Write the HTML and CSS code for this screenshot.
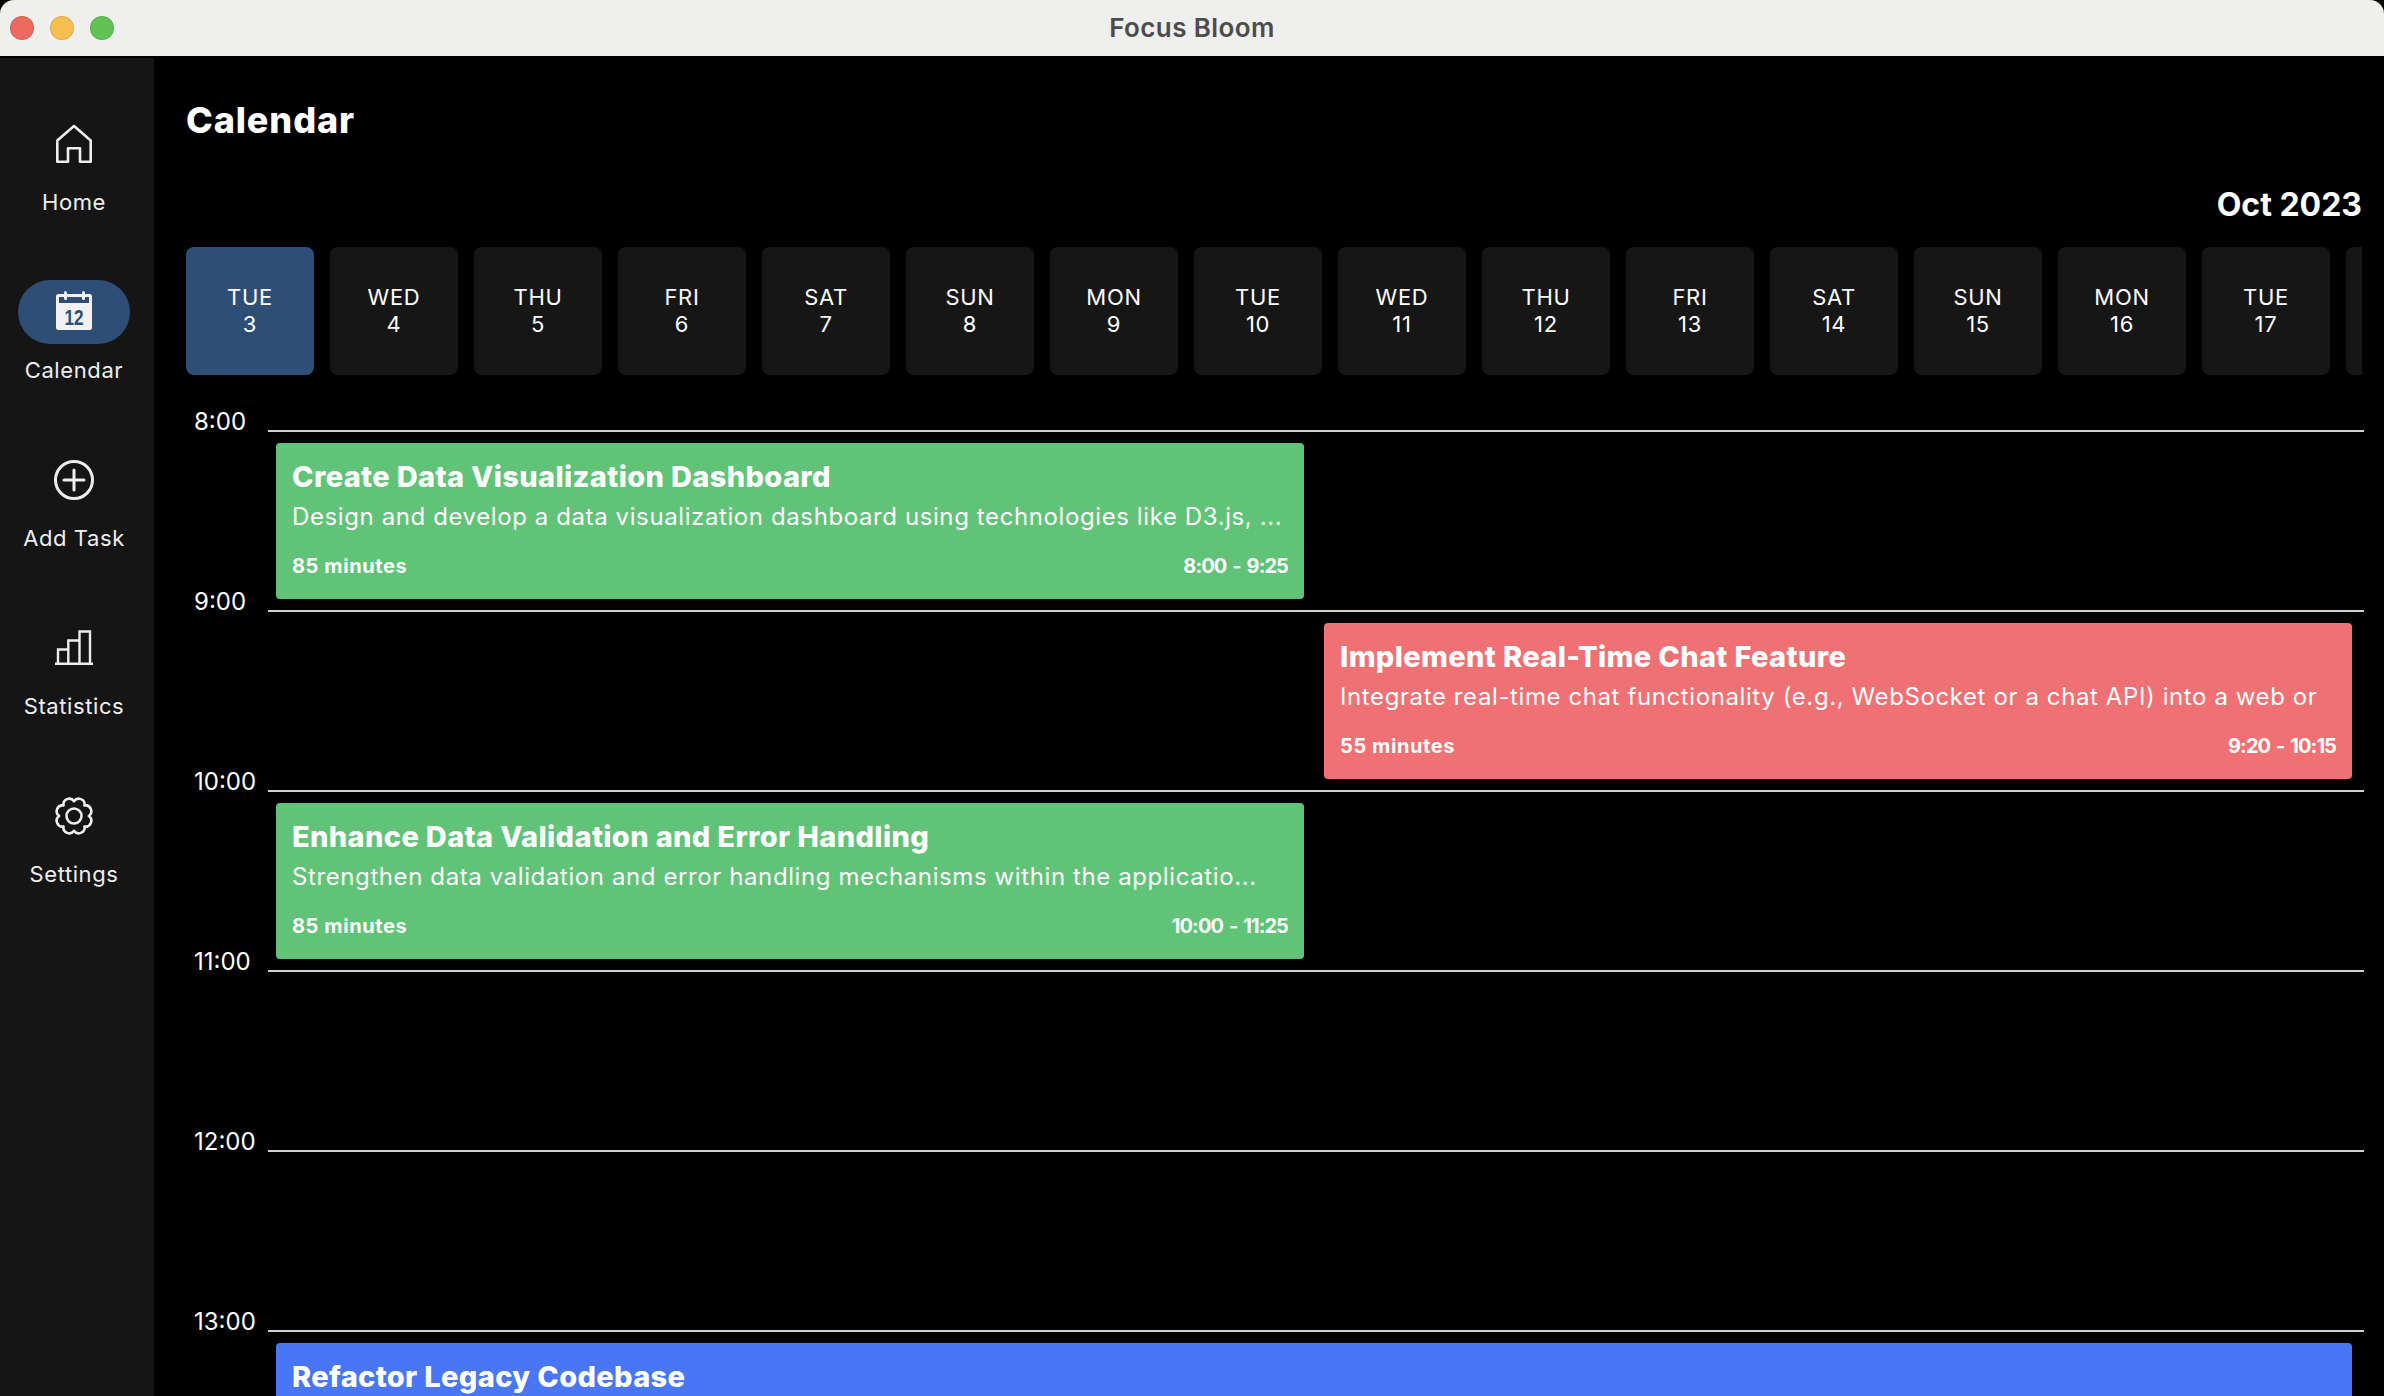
FILE: index.html
```html
<!DOCTYPE html>
<html lang="en">
<head>
<meta charset="utf-8">
<title>Focus Bloom</title>
<link rel="stylesheet" href="styles.css">
</head>
<body>
<div class="window">
  <header class="titlebar">
    <div class="lights">
      <span class="light light-red"></span>
      <span class="light light-yellow"></span>
      <span class="light light-green"></span>
    </div>
    <span class="window-title">Focus Bloom</span>
  </header>
  <div class="app">
    <nav class="sidebar">
      <a class="nav-item">
        <span class="nav-icon">
          <svg width="48" height="48" viewBox="0 0 48 48" fill="none" stroke="#eee" stroke-width="2.6" stroke-linejoin="round"><path d="M7.3 20.5 24 6l16.700 14.500V41.700H30V28.200H18V41.700H7.300Z"/></svg>
        </span>
        <span class="nav-label">Home</span>
      </a>
      <a class="nav-item nav-item-active">
        <span class="nav-icon">
          <svg width="48" height="48" viewBox="0 0 48 48">
            <rect x="6" y="6" width="36" height="36" rx="2.500" fill="#f1f1f3"/>
            <rect x="9" y="9" width="30" height="6" fill="#2e4e75"/>
            <rect x="14" y="3" width="3" height="9" rx="1.500" fill="#f1f1f3"/>
            <rect x="32" y="3" width="3" height="9" rx="1.500" fill="#f1f1f3"/>
            <text x="24" y="36.500" text-anchor="middle" textLength="19" lengthAdjust="spacingAndGlyphs" class="cal-num">12</text>
          </svg>
        </span>
        <span class="nav-label">Calendar</span>
      </a>
      <a class="nav-item">
        <span class="nav-icon">
          <svg width="48" height="48" viewBox="0 0 48 48" fill="none" stroke="#eee" stroke-width="3"><circle cx="24" cy="24" r="18.500"/><path d="M14 24H34M24 14V34" stroke-linecap="round"/></svg>
        </span>
        <span class="nav-label">Add Task</span>
      </a>
      <a class="nav-item">
        <span class="nav-icon">
          <svg width="48" height="48" viewBox="0 0 48 48" fill="none" stroke="#eee" stroke-width="2.400"><path d="M5 39.800H43"/><path d="M8 39.800V25.500H18.300V39.800M18.300 25.500V16.500H29.500V39.800M29.500 16.500V7.500H40V39.800"/></svg>
        </span>
        <span class="nav-label">Statistics</span>
      </a>
      <a class="nav-item">
        <span class="nav-icon">
          <svg width="48" height="48" viewBox="0 0 48 48" fill="none" stroke="#eee" stroke-width="2.600" stroke-linejoin="round"><path d="M38.800 24A5.800 5.800 0 0 1 34.470 34.470 5.800 5.800 0 0 1 24 38.800 5.800 5.800 0 0 1 13.530 34.470 5.800 5.800 0 0 1 9.200 24 5.800 5.800 0 0 1 13.530 13.530 5.800 5.800 0 0 1 24 9.200 5.800 5.800 0 0 1 34.470 13.530 5.800 5.800 0 0 1 38.800 24Z"/><circle cx="24" cy="24" r="7.500"/></svg>
        </span>
        <span class="nav-label">Settings</span>
      </a>
    </nav>
    <main class="content">
      <h1 class="page-title">Calendar</h1>
      <div class="month">Oct 2023</div>
      <div class="days">
        <div class="day day-active"><span>TUE</span><span>3</span></div>
        <div class="day"><span>WED</span><span>4</span></div>
        <div class="day"><span>THU</span><span>5</span></div>
        <div class="day"><span>FRI</span><span>6</span></div>
        <div class="day"><span>SAT</span><span>7</span></div>
        <div class="day"><span>SUN</span><span>8</span></div>
        <div class="day"><span>MON</span><span>9</span></div>
        <div class="day"><span>TUE</span><span>10</span></div>
        <div class="day"><span>WED</span><span>11</span></div>
        <div class="day"><span>THU</span><span>12</span></div>
        <div class="day"><span>FRI</span><span>13</span></div>
        <div class="day"><span>SAT</span><span>14</span></div>
        <div class="day"><span>SUN</span><span>15</span></div>
        <div class="day"><span>MON</span><span>16</span></div>
        <div class="day"><span>TUE</span><span>17</span></div>
        <div class="day"></div>
      </div>
      <div class="timeline">
        <section class="hour">
          <div class="hour-label">8:00</div>
          <div class="slot">
            <article class="task task-green">
              <h2 class="task-title">Create Data Visualization Dashboard</h2>
              <p class="task-desc">Design and develop a data visualization dashboard using technologies like D3.js, ...</p>
              <div class="task-foot"><span class="task-duration">85 minutes</span><span class="task-time">8:00 - 9:25</span></div>
            </article>
          </div>
        </section>
        <section class="hour">
          <div class="hour-label">9:00</div>
          <div class="slot">
            <article class="task task-red task-second">
              <h2 class="task-title">Implement Real-Time Chat Feature</h2>
              <p class="task-desc">Integrate real-time chat functionality (e.g., WebSocket or a chat API) into a web or</p>
              <div class="task-foot"><span class="task-duration">55 minutes</span><span class="task-time">9:20 - 10:15</span></div>
            </article>
          </div>
        </section>
        <section class="hour">
          <div class="hour-label">10:00</div>
          <div class="slot">
            <article class="task task-green">
              <h2 class="task-title">Enhance Data Validation and Error Handling</h2>
              <p class="task-desc">Strengthen data validation and error handling mechanisms within the applicatio...</p>
              <div class="task-foot"><span class="task-duration">85 minutes</span><span class="task-time">10:00 - 11:25</span></div>
            </article>
          </div>
        </section>
        <section class="hour">
          <div class="hour-label">11:00</div>
          <div class="slot"></div>
        </section>
        <section class="hour">
          <div class="hour-label">12:00</div>
          <div class="slot"></div>
        </section>
        <section class="hour">
          <div class="hour-label">13:00</div>
          <div class="slot">
            <article class="task task-blue task-wide">
              <h2 class="task-title">Refactor Legacy Codebase</h2>
            </article>
          </div>
        </section>
      </div>
    </main>
  </div>
</div>
</body>
</html>
```

FILE: styles.css
```css
* { box-sizing: border-box; }
html, body { margin: 0; padding: 0; height: 100%; background: #000; }
body { font-family: Inter, "Noto Sans", "Liberation Sans", sans-serif; color: #fff; overflow: hidden; }

.window { height: 1396px; display: flex; flex-direction: column; overflow: hidden; }

.titlebar {
  flex: none; height: 56px; padding-bottom: 2px; position: relative;
  display: flex; align-items: center; justify-content: center;
  background: #efefed; border-radius: 14px 14px 0 0;
}
.lights { position: absolute; left: 10px; top: 16px; display: flex; gap: 16px; }
.light { width: 24px; height: 24px; border-radius: 50%; border: 1px solid rgba(0,0,0,.1); }
.light-red { background: #ee6a5f; }
.light-yellow { background: #f6bf50; }
.light-green { background: #5fc454; }
.window-title { font-size: 26px; font-weight: 600; letter-spacing: 0.4px; color: #4c4c4c; }

.app { flex: 1; min-height: 0; display: flex; }

.sidebar {
  flex: none; width: 154px; margin-top: 2px; padding: 54px 0 0 18px;
  background: #151515; display: flex; flex-direction: column; align-items: flex-start;
}
.nav-item { width: 112px; height: 168px; display: flex; flex-direction: column; align-items: center; }
.nav-icon { width: 112px; height: 64px; border-radius: 32px; display: flex; align-items: center; justify-content: center; flex: none; }
.nav-item-active .nav-icon { background: #2e4e75; }
.nav-label { margin-top: 12px; line-height: 28px; font-size: 22px; letter-spacing: 0.6px; color: #eee; white-space: nowrap; }
.cal-num { font-family: "Liberation Sans", sans-serif; font-size: 22px; font-weight: 700; fill: #2e4e75; }

.content { flex: 1; min-width: 0; padding: 0 20px 0 32px; display: flex; flex-direction: column; }
.page-title { margin: 44px 0 0; font-size: 36px; line-height: 40px; font-weight: 800; letter-spacing: 0.9px; }
.month { margin: 45px 2px 0 0; text-align: right; font-size: 32px; line-height: 40px; font-weight: 700; }
.days { margin: 22px 2px 0 0; display: flex; gap: 16px; overflow: hidden; flex: none; }
.day {
  flex: none; width: 128px; height: 128px; border-radius: 8px; background: #161616;
  display: flex; flex-direction: column; align-items: center; justify-content: center;
  font-size: 22px; line-height: 27px; letter-spacing: 0.7px;
}
.day-active { background: #2e4e75; }

.timeline { margin-top: 55px; display: flex; flex-direction: column; }
.hour { height: 180px; display: flex; flex: none; }
.hour-label { flex: none; width: 82px; padding-left: 8px; margin-top: -20px; font-size: 24px; line-height: 24px; }
.slot {
  flex: 1; border-top: 2px solid #d0d0d0; padding: 11px 12px 0 8px;
  display: grid; grid-template-columns: 1fr 1fr; column-gap: 20px; align-content: start;
}
.task { height: 156px; border-radius: 4px; padding: 17px 16px 0; min-width: 0; }
.task-second { grid-column: 2; }
.task-wide { grid-column: 1 / -1; }
.task-green { background: #60c377; }
.task-red { background: #ef7173; }
.task-blue { background: #4876f5; }
.task-title { margin: 0; font-size: 29px; line-height: 34px; font-weight: 800; letter-spacing: 0.35px; white-space: nowrap; }
.task-desc { margin: 7px 0 0; font-size: 24px; line-height: 32px; letter-spacing: 0.6px; white-space: nowrap; }
.task-foot { margin-top: 21px; display: flex; justify-content: space-between; font-size: 20px; line-height: 24px; font-weight: 700; }
.task-duration { letter-spacing: 0.6px; }
.task-time { letter-spacing: -0.9px; word-spacing: 2px; }
```
